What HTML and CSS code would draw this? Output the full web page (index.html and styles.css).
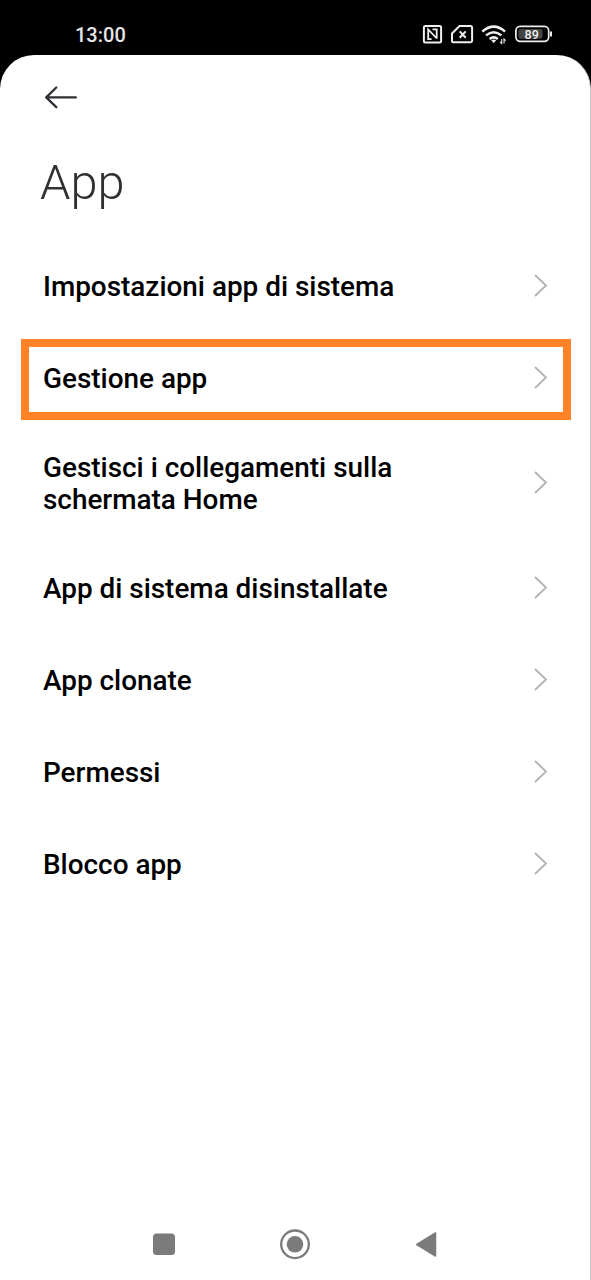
FILE: index.html
```html
<!DOCTYPE html>
<html lang="it">
<head>
<meta charset="utf-8">
<title>App</title>
<link rel="stylesheet" href="styles.css">
</head>
<body>
<header class="status">
  <span class="clock">13:00</span>
  <svg class="status-icons" width="132" height="24" viewBox="0 0 132 24" fill="none" stroke="#eee" stroke-width="2">
    <rect x="3.9" y="3.9" width="17.2" height="16.6" rx="1.5"/>
    <path d="M11.6 17.1H8.2V7.4l8.2 8.6M12.5 7.4h4.2v9.4" stroke-width="1.8"/>
    <path d="M39.5 4.1H50.5a1.6 1.6 0 0 1 1.6 1.6V18.7a1.6 1.6 0 0 1-1.6 1.6H33.6a1.6 1.6 0 0 1-1.6-1.6V11.5z"/>
    <path d="M39.7 9.4l6 6.4M45.7 9.4l-6 6.4"/>
    <path d="M62.3 9.6q11.4-10 22.8 0M66 13.4q7.7-6.4 15.4 0M69.6 17q4.1-3.3 8.2 0" stroke-width="2.5"/>
    <path d="M71.2 18.3q2.5-1.4 5 0l-2.5 3z" fill="#eee" stroke="none"/>
    <path d="M81.7 17v4.5l-1.7-1.6M84 21.5V17l1.7 1.6" stroke-width="1.1"/>
    <rect x="95.9" y="4.4" width="32.8" height="15" rx="4.3" stroke-width="1.7"/>
    <rect x="98.5" y="7" width="24" height="9.8" rx="2" fill="#444" stroke="none"/>
    <path d="M131 9.5v5" stroke-width="2"/>
    <text class="battery" x="111.7" y="16.5" text-anchor="middle">89</text>
  </svg>
</header>
<main class="screen">
  <svg class="back" width="34" height="24" viewBox="0 0 34 24" fill="none" stroke="#303034" stroke-width="2.3" stroke-linecap="round" stroke-linejoin="round"><path d="M31.8 12.4H2.5M12.3 2.5L2.2 12.4l10.1 9.8"/></svg>
  <h1 class="title">App</h1>
  <ul class="list">
    <li class="row"><span class="label">Impostazioni app di sistema</span><svg class="chevron" viewBox="0 0 14 24"><path d="M1 2l11 10.5L1 23"/></svg></li>
    <li class="row marked"><span class="label">Gestione app</span><svg class="chevron" viewBox="0 0 14 24"><path d="M1 2l11 10.5L1 23"/></svg></li>
    <li class="row tall"><span class="label">Gestisci i collegamenti sulla<br>schermata Home</span><svg class="chevron" viewBox="0 0 14 24"><path d="M1 2l11 10.5L1 23"/></svg></li>
    <li class="row"><span class="label">App di sistema disinstallate</span><svg class="chevron" viewBox="0 0 14 24"><path d="M1 2l11 10.5L1 23"/></svg></li>
    <li class="row"><span class="label">App clonate</span><svg class="chevron" viewBox="0 0 14 24"><path d="M1 2l11 10.5L1 23"/></svg></li>
    <li class="row"><span class="label">Permessi</span><svg class="chevron" viewBox="0 0 14 24"><path d="M1 2l11 10.5L1 23"/></svg></li>
    <li class="row"><span class="label">Blocco app</span><svg class="chevron" viewBox="0 0 14 24"><path d="M1 2l11 10.5L1 23"/></svg></li>
  </ul>
  <nav class="nav">
    <svg width="24" height="32" viewBox="0 0 24 32"><rect x="1" y="5.5" width="22" height="21.5" rx="3.5" fill="#7b7b7b"/></svg>
    <svg width="32" height="32" viewBox="0 0 32 32"><circle cx="16" cy="16.3" r="13.8" fill="none" stroke="#7b7b7b" stroke-width="2.3"/><circle cx="16" cy="16.3" r="8.3" fill="#7b7b7b"/></svg>
    <svg width="24" height="32" viewBox="0 0 24 32"><path d="M2.8 16.5L21.5 5V28z" fill="#7b7b7b" stroke="#7b7b7b" stroke-width="1.5" stroke-linejoin="round"/></svg>
  </nav>
</main>
</body>
</html>
```
FILE: styles.css
```css
*, *::after { box-sizing: border-box; }
body {
  margin: 0;
  height: 1280px;
  display: flex;
  flex-direction: column;
  background: #000;
  font-family: Roboto, "Liberation Sans", sans-serif;
  overflow: hidden;
}
.status {
  height: 55px;
  flex: none;
  display: flex;
  justify-content: space-between;
  padding: 22px 39px 0 75px;
  color: #e6e6e6;
}
.clock { font-size: 20px; line-height: 26px; font-weight: 500; }
.status-icons { flex: none; }
.battery { font-size: 12.5px; font-weight: 500; fill: #eee; stroke: none; }
.screen {
  flex: 1;
  display: flex;
  flex-direction: column;
  background: #fff;
  border-right: 1px solid #c8c8cc;
  border-radius: 34px 34px 0 0;
}
.back { flex: none; margin: 30px 0 0 44px; }
.title {
  margin: 44px 0 0 40px;
  height: 60px;
  line-height: 60px;
  font-size: 48.7px;
  font-weight: 300;
  color: #303034;
}
.list { list-style: none; margin: 26px 0 0; padding: 0; }
.row {
  position: relative;
  height: 92px;
  display: flex;
  align-items: center;
  justify-content: space-between;
  padding: 0 42px 0 43px;
}
.tall { height: 118px; }
.label { font-size: 27.9px; line-height: 32px; font-weight: 500; color: #000; padding-top: 3px; }
.chevron {
  width: 14px;
  height: 24px;
  flex: none;
  fill: none;
  stroke: #b4b4b4;
  stroke-width: 1.9;
}
.marked::after {
  content: "";
  position: absolute;
  left: 21px;
  top: 8px;
  width: 550px;
  height: 81px;
  border: 8px solid #ff8228;
}
.nav {
  margin-top: auto;
  display: flex;
  justify-content: space-between;
  padding: 0 152px 20px 152px;
}
```
